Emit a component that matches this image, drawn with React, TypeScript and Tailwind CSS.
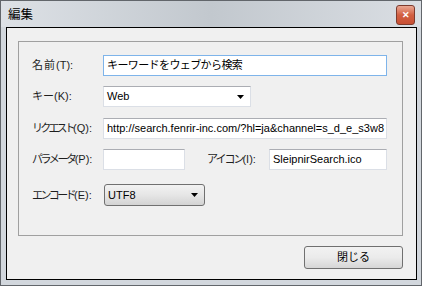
const font = "font-['Liberation_Sans','Noto_Sans_CJK_JP',sans-serif]"

function Arrow() {
  return (
    <svg width="7" height="4" viewBox="0 0 7 4" className="shrink-0">
      <polygon points="0,0 7,0 3.5,4" fill="#000" />
    </svg>
  )
}

function TextBox({ value, width, focused, jp }: { value: string; width: string; focused?: boolean; jp?: boolean }) {
  return (
    <div
      className={`${width} h-[21px] bg-white border overflow-hidden whitespace-nowrap flex items-center pl-[3px] text-[11px] text-black ${
        focused ? "border-[#7eb4ea]" : "border-[#dbdfe6] border-t-[#abadb3]"
      } ${jp ? "tracking-[-0.6px]" : ""}`}
    >
      {value}
    </div>
  )
}

// jp part is squeezed to match the narrow kana of the original UI font
function Label({ jp, key2, width, track }: { jp: string; key2: string; width: string; track: string }) {
  return (
    <div className={`${width} shrink-0 whitespace-nowrap text-[11px] text-[#1e1e1e]`}>
      <span className={track}>{jp}</span>
      <span>{key2}</span>
    </div>
  )
}

export default function App() {
  return (
    <div className={`w-[422px] h-[286px] ${font} border border-[#62666b] bg-[#d2d7dd] flex flex-col`}>
      {/* Title bar */}
      <div className="h-[26px] shrink-0 flex items-start justify-between pl-[7px] pr-[6px] bg-linear-to-r from-[#dde1e6] via-[#c2c8ce] to-[#dadee3]">
        <span className="mt-[5px] text-[12.5px] text-black">編集</span>
        <div className="mt-[4px] w-[19px] h-[20px] rounded-[3px] border border-[#7d3b2e] bg-linear-to-b from-[#e9a793] via-[#d25f42] to-[#c85034] flex items-center justify-center">
          <span className="text-white text-[9px] font-bold leading-none">✕</span>
        </div>
      </div>

      {/* Client area */}
      <div className="flex-1 ml-[5px] mr-[4px] mb-[5px] border border-black bg-[#f0f0f0]">
        <div className="ml-[11px] mt-[13px] w-[385px] flex flex-col">
          {/* Group box */}
          <div className="h-[195px] border border-[#a0a0a0] pl-[13px] pt-[13px] flex flex-col">
            <div className="flex items-center">
              <Label jp="名前" key2="(T):" width="w-[71px]" track="tracking-[1px]" />
              <TextBox value="キーワードをウェブから検索" width="w-[284px]" focused jp />
            </div>
            <div className="flex items-center mt-[10px]">
              <Label jp="キー" key2="(K):" width="w-[71px]" track="tracking-[0px]" />
              <div className="w-[148px] h-[21px] bg-white border border-[#dbdfe6] border-t-[#abadb3] flex items-center justify-between pl-[3px] pr-[6px] text-[11px]">
                <span>Web</span>
                <Arrow />
              </div>
            </div>
            <div className="flex items-center mt-[11px]">
              <Label jp="リクエスト" key2="(Q):" width="w-[71px]" track="tracking-[-2.8px]" />
              <TextBox value="http://search.fenrir-inc.com/?hl=ja&channel=s_d_e_s3w8" width="w-[284px]" />
            </div>
            <div className="flex items-center mt-[10px]">
              <Label jp="パラメータ" key2="(P):" width="w-[71px]" track="tracking-[-2.4px]" />
              <TextBox value="" width="w-[82px]" />
              <div className="ml-[22px]">
                <Label jp="アイコン" key2="(I):" width="w-[62px]" track="tracking-[-2px]" />
              </div>
              <TextBox value="SleipnirSearch.ico" width="w-[118px]" />
            </div>
            <div className="flex items-center mt-[14px]">
              <Label jp="エンコード" key2="(E):" width="w-[72px]" track="tracking-[-2.6px]" />
              <div className="w-[101px] h-[22px] rounded-[3px] border border-[#707070] bg-linear-to-b from-[#f2f2f2] via-[#e6e6e6] to-[#d3d3d3] flex items-center justify-between pl-[3px] pr-[6px] text-[11px]">
                <span>UTF8</span>
                <Arrow />
              </div>
            </div>
          </div>

          {/* Footer */}
          <div className="flex justify-end mt-[10px]">
            <button className="w-[99px] h-[23px] rounded-[3px] border border-[#707070] bg-linear-to-b from-[#f2f2f2] via-[#ebebeb] to-[#d6d6d6] text-[11px] text-black">
              閉じる
            </button>
          </div>
        </div>
      </div>
    </div>
  )
}
